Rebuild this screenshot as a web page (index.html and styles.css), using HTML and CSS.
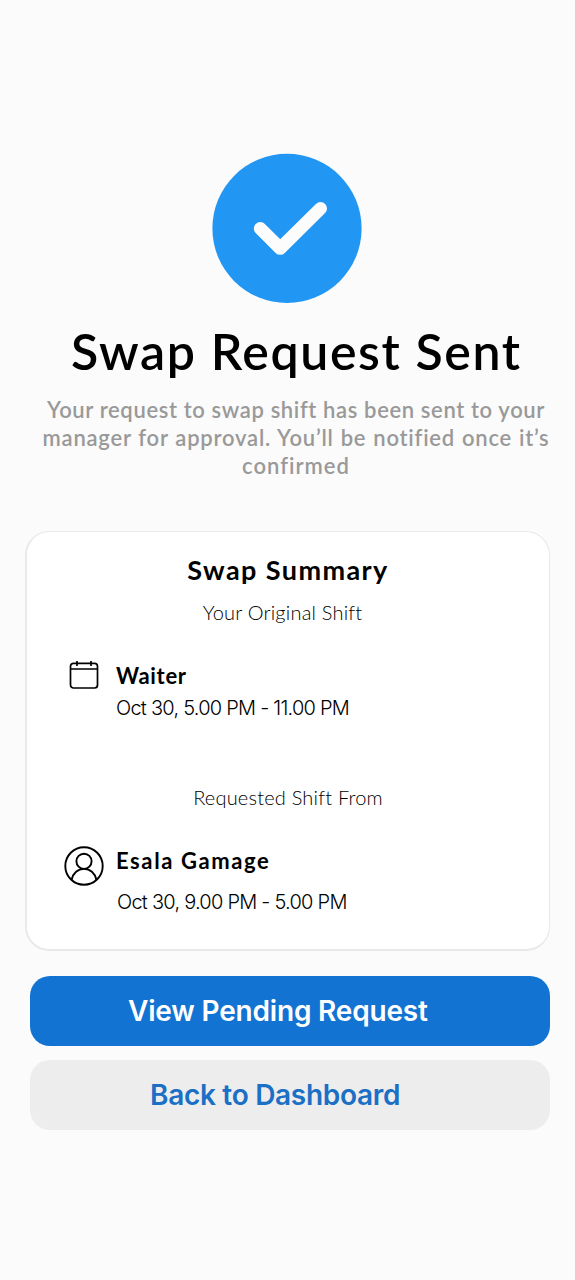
FILE: index.html
```html
<!DOCTYPE html>
<html lang="en">
<head>
<meta charset="utf-8">
<title>Swap Request Sent</title>
<link rel="stylesheet" href="styles.css">
</head>
<body>
<main class="screen">
  <svg class="success" viewBox="0 0 150 150" fill="none">
    <circle cx="75" cy="75.400" r="74.600" fill="#2296f3"/>
    <path d="M48.300 75.500 68.200 95.300 108.500 55.500" stroke="#fcfcfc" stroke-width="13" stroke-linecap="round" stroke-linejoin="round"/>
  </svg>
  <h1 class="title">Swap Request Sent</h1>
  <p class="message">
    <span class="line-1">Your request to swap shift has been sent to your</span>
    <span class="line-2">manager for approval. You’ll be notified once it’s</span>
    <span class="line-3">confirmed</span>
  </p>
  <section class="card">
    <h2 class="card-title">Swap Summary</h2>
    <p class="label label-own">Your Original Shift</p>
    <div class="shift shift-own">
      <svg class="icon" viewBox="0 0 40 40" fill="none" stroke="#000" stroke-width="1.700">
        <rect x="6.500" y="8.300" width="27" height="24.700" rx="3"/>
        <path d="M6.500 14H33.500M13 6V11M27 6V11"/>
      </svg>
      <div class="details">
        <h3 class="name">Waiter</h3>
        <p class="time">Oct 30, 5.00 PM - 11.00 PM</p>
      </div>
    </div>
    <p class="label label-from">Requested Shift From</p>
    <div class="shift shift-from">
      <svg class="icon" viewBox="0 0 40 40" fill="none" stroke="#000" stroke-width="1.900">
        <circle cx="20" cy="20" r="18.700"/>
        <circle cx="20" cy="15.300" r="7.600"/>
        <path d="M7.500 34C9 27 14 22.900 20 22.900S31 27 32.500 34"/>
      </svg>
      <div class="details">
        <h3 class="name">Esala Gamage</h3>
        <p class="time">Oct 30, 9.00 PM - 5.00 PM</p>
      </div>
    </div>
  </section>
  <div class="actions">
    <button class="button primary">View Pending Request</button>
    <button class="button secondary">Back to Dashboard</button>
  </div>
</main>
</body>
</html>
```
FILE: styles.css
```css
* { box-sizing: border-box; }
body { margin: 0; background: #fbfbfb; color: #000; font-family: Lato, sans-serif; }
h1, h2, h3, p { margin: 0; white-space: nowrap; }
.screen { width: 575px; height: 1280px; padding-top: 153px; display: flex; flex-direction: column; overflow: hidden; }
.success { width: 150px; height: 150px; margin-left: 212px; flex: none; }
.title { height: 60px; margin: 18px 0 0 71px; font-size: 50px; line-height: 60px; font-weight: 600; letter-spacing: 1.6px; }
.message { width: 508px; margin: 15px 0 0 42px; display: flex; flex-direction: column; align-items: center; color: #999; font-size: 22px; line-height: 28px; font-weight: 600; }
.line-1 { letter-spacing: .63px; }
.line-2 { letter-spacing: .78px; word-spacing: .7px; }
.line-3 { letter-spacing: 1px; }
.card { width: 525px; height: 420px; margin: 51px 0 0 25px; padding-top: 20px; border: 1px solid #e9e9e9; border-left-width: 2px; border-bottom-width: 2px; border-radius: 24px; background: #fff; flex: none; }
.card-title { text-align: center; font-size: 27px; line-height: 36px; font-weight: 700; letter-spacing: 1.4px; }
.label { text-align: center; font-size: 20px; line-height: 24px; font-weight: 300; letter-spacing: .2px; }
.label-own { margin-top: 12px; padding-right: 11px; }
.shift { display: flex; padding-left: 37px; gap: 12px; }
.shift-own { margin-top: 30px; }
.label-from { margin-top: 63px; }
.shift-from { margin-top: 37px; }
.icon { width: 40px; height: 40px; flex: none; }
.name { font-size: 22px; line-height: 32px; font-weight: 700; }
.shift-own .icon { margin-top: 1px; }
.shift-own .name { margin-top: 6px; letter-spacing: .7px; }
.shift-from .name { margin-top: -1px; letter-spacing: 1.6px; }
.time { font-family: Inter, sans-serif; font-size: 20px; line-height: 28px; font-weight: 300; letter-spacing: -.75px; }
.shift-own .time { margin-top: 2px; }
.shift-from .time { margin-top: 11px; padding-left: 1px; }
.actions { display: flex; flex-direction: column; gap: 14px; width: 520px; margin: 25px 0 0 30px; }
.button { height: 70px; border: 0; border-radius: 20px; padding: 0; text-align: left; font-family: Inter, sans-serif; font-size: 28px; line-height: 70px; font-weight: 600; white-space: nowrap; }
.primary { background: #1273d3; color: #fff; padding-left: 98px; letter-spacing: -.18px; }
.secondary { background: #ededed; color: #1b6fc5; padding-left: 120px; letter-spacing: -.3px; }
```
